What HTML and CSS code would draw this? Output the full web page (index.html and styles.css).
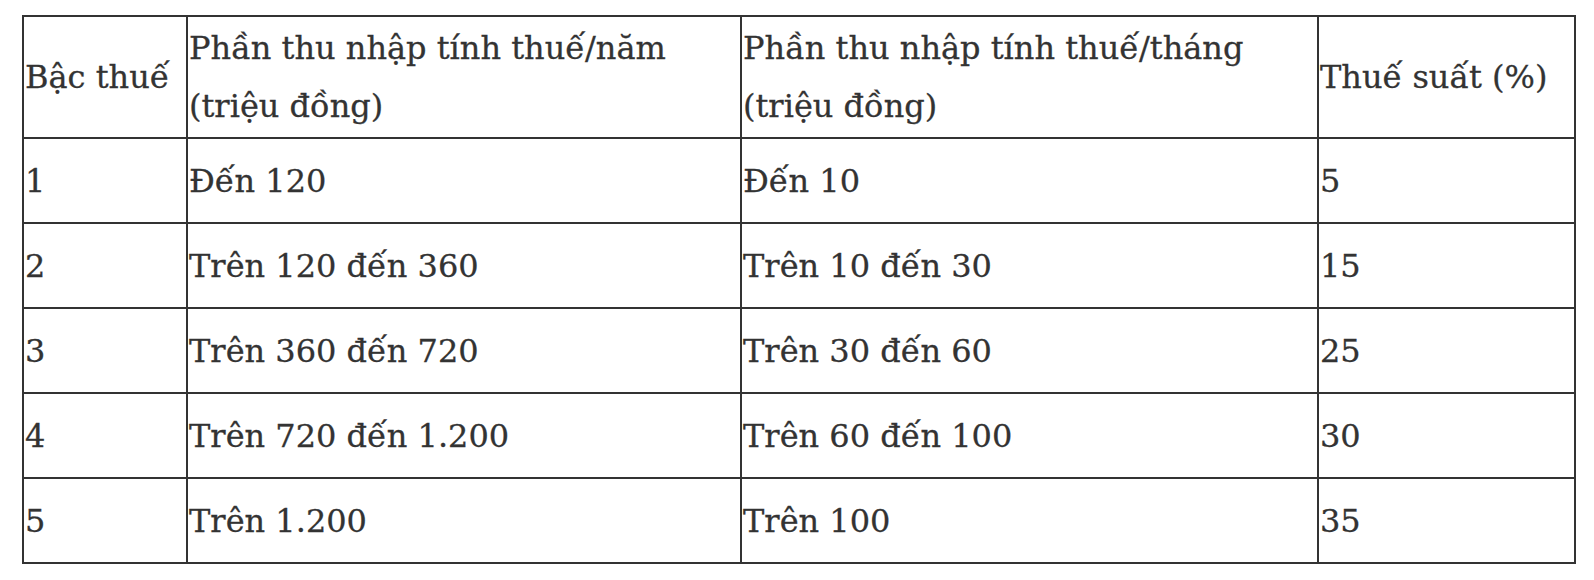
FILE: index.html
```html
<!DOCTYPE html>
<html lang="vi">
<head>
<meta charset="utf-8">
<link rel="stylesheet" href="styles.css">
</head>
<body>
<div class="wrap">
<table class="tax">
<colgroup>
<col class="c1"><col class="c2"><col class="c3"><col class="c4">
</colgroup>
<thead>
<tr>
<th>Bậc thuế</th>
<th>Phần thu nhập tính thuế/năm<br>(triệu đồng)</th>
<th>Phần thu nhập tính thuế/tháng<br>(triệu đồng)</th>
<th>Thuế suất (%)</th>
</tr>
</thead>
<tbody>
<tr><td>1</td><td>Đến 120</td><td>Đến 10</td><td>5</td></tr>
<tr><td>2</td><td>Trên 120 đến 360</td><td>Trên 10 đến 30</td><td>15</td></tr>
<tr><td>3</td><td>Trên 360 đến 720</td><td>Trên 30 đến 60</td><td>25</td></tr>
<tr><td>4</td><td>Trên 720 đến 1.200</td><td>Trên 60 đến 100</td><td>30</td></tr>
<tr><td>5</td><td>Trên 1.200</td><td>Trên 100</td><td>35</td></tr>
</tbody>
</table>
</div>
</body>
</html>
```
FILE: styles.css
```css
html, body {
  margin: 0;
  padding: 0;
  background: #fff;
}
.wrap {
  padding: 15px 0 0 22px;
}
.tax {
  table-layout: fixed;
  width: 1554px;
  border-collapse: separate;
  border-spacing: 0;
  border-top: 2px solid #333;
  border-left: 2px solid #333;
  font-family: "DejaVu Serif", "Liberation Serif", serif;
  font-size: 32px;
  line-height: 58px;
  color: #333;
  -webkit-text-stroke: 0.3px #333;
}
.c1 { width: 164px; }
.c2 { width: 554px; }
.c3 { width: 577px; }
.c4 { width: 257px; }
.tax th, .tax td {
  border-right: 2px solid #333;
  border-bottom: 2px solid #333;
  padding: 0 0 0 1px;
  text-align: left;
  font-weight: normal;
  vertical-align: middle;
}
.tax th {
  height: 120px;
}
.tax td {
  height: 83px;
}
```
